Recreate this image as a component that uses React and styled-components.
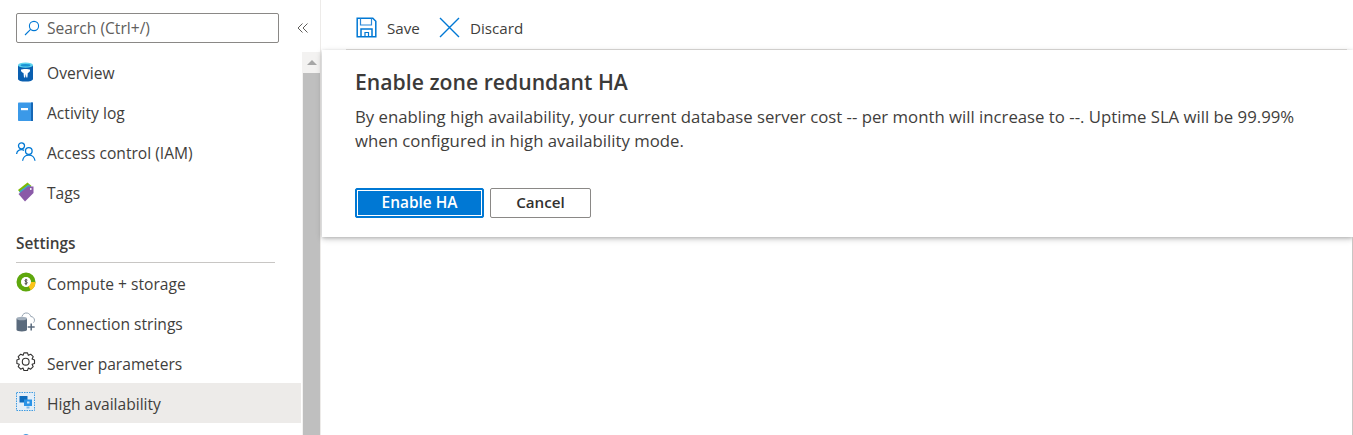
import styled, { createGlobalStyle } from "styled-components";

const GlobalStyle = createGlobalStyle`
  html, body { margin: 0; padding: 0; height: 435px; overflow: hidden; background: #fff; }
  body { font-family: "Open Sans", "Noto Sans", sans-serif; color: #323130; }
`;

const Page = styled.div`
  display: flex;
  width: 1353px;
  height: 435px;
  overflow: hidden;
`;

const Sidebar = styled.aside`
  width: 320px;
  flex: none;
  display: flex;
  flex-direction: column;
`;

const SearchRow = styled.div`
  height: 52px;
  flex: none;
  display: flex;
  align-items: flex-start;
  padding: 13px 0 0 16px;
  box-sizing: border-box;
`;

const SearchBox = styled.div`
  width: 263px;
  height: 30px;
  box-sizing: border-box;
  border: 1px solid #8a8886;
  border-radius: 2px;
  display: flex;
  align-items: center;
  gap: 7px;
  padding-left: 7px;
  font-size: 15.6px;
  color: #605e5c;
`;

const Collapse = styled.div`
  margin: 9px 0 0 18px;
  line-height: 0;
`;

const NavArea = styled.div`
  flex: 1;
  display: flex;
  min-height: 0;
`;

const NavList = styled.nav`
  width: 302px;
  flex: none;
  box-sizing: border-box;
  overflow: hidden;
  padding: 1px 1px 0 0;
`;

const NavItem = styled.div`
  height: 40px;
  display: flex;
  align-items: center;
  padding-left: 16px;
  gap: 11px;
  font-size: 15.6px;
  color: #3f3e3c;
  background: ${({ $active }) => ($active ? "#edebe9" : "transparent")};
`;

const NavLabel = styled.span`
  padding-top: ${({ $drop }) => ($drop ? "2px" : "0")};
`;

const IconSlot = styled.span`
  width: 20px;
  height: 20px;
  flex: none;
  line-height: 0;
  margin-bottom: 2px;
`;

const SectionTitle = styled.div`
  margin: 0 26px 0 16px;
  height: 50px;
  box-sizing: border-box;
  padding-top: 21px;
  border-bottom: 1px solid #c8c6c4;
  font-size: 15.4px;
  font-weight: 600;
  line-height: 20px;
  color: #3f3e3c;
`;

const ScrollBar = styled.div`
  width: 18px;
  flex: none;
  background: #f3f2f1;
  display: flex;
  flex-direction: column;
  align-items: center;
  padding-left: 1px;
  box-sizing: border-box;
`;

const ScrollArrow = styled.div`
  height: 21px;
  width: 100%;
  display: flex;
  align-items: center;
  justify-content: center;

  &::before {
    content: "";
    border-left: 5px solid transparent;
    border-right: 5px solid transparent;
    border-bottom: 5px solid #a6a6a6;
  }
`;

const ScrollThumb = styled.div`
  flex: 1;
  width: 100%;
  background: #bfbfbf;
`;

const Main = styled.main`
  flex: 1;
  display: flex;
  flex-direction: column;
  min-width: 0;
  border-left: 1px solid #edebe9;
`;

const Toolbar = styled.div`
  height: 50px;
  flex: none;
  box-sizing: border-box;
  margin-left: 25px;
  margin-right: 6px;
  padding: 6px 0 0 10px;
  display: flex;
  align-items: center;
  gap: 19px;
  border-bottom: 1px solid #e1dfdd;
`;

const ToolButton = styled.div`
  display: flex;
  align-items: center;
  gap: 10px;
  font-size: 15.2px;
  color: #3f3e3c;
`;

const ToolIcon = styled.span`
  line-height: 0;
`;

const Dialog = styled.section`
  height: 187px;
  flex: none;
  box-sizing: border-box;
  margin-left: 1px;
  padding: 18px 30px 0 33px;
  background: #fff;
  box-shadow: 0 1.6px 6px rgba(0, 0, 0, 0.22), 0 1px 3px rgba(0, 0, 0, 0.14);
`;

const DialogTitle = styled.h2`
  margin: 0;
  font-size: 21.2px;
  font-weight: 600;
  line-height: 28px;
  color: #3b3a39;
`;

const DialogText = styled.p`
  margin: 9px 0 0;
  font-size: 16.75px;
  line-height: 24px;
  color: #3f3e3c;
`;

const Actions = styled.div`
  margin-top: 35px;
  display: flex;
  gap: 6px;
`;

const PrimaryButton = styled.button`
  width: 129px;
  height: 30px;
  border: 1px solid #0078d4;
  border-radius: 2px;
  background: #0078d4;
  outline: 1px solid #fff;
  outline-offset: -3px;
  color: #fff;
  font: 600 15.4px "Open Sans", sans-serif;
  padding: 0 0 2px;
`;

const DefaultButton = styled.button`
  width: 101px;
  height: 30px;
  border: 1px solid #8a8886;
  border-radius: 2px;
  background: #fff;
  color: #323130;
  font: 600 15.2px "Open Sans", sans-serif;
  padding: 0 0 2px;
`;

const BladeBody = styled.div`
  flex: 1;
  border-right: 1px solid #c8c6c4;
`;

const SearchIcon = () => (
  <svg width="16" height="16" viewBox="0 0 16 16" fill="none" stroke="#0078d4" strokeWidth="1.1">
    <circle cx="10" cy="6" r="4.6" />
    <path d="M6.6 9.4 1 15" />
  </svg>
);

const CollapseIcon = () => (
  <svg width="12" height="12" viewBox="0 0 12 12" fill="none" stroke="#605e5c" strokeWidth="1">
    <path d="M5.5 1.5 1 6l4.5 4.5M10.5 1.5 6 6l4.5 4.5" />
  </svg>
);

const SaveIcon = () => (
  <svg width="21" height="21" viewBox="0 0 21 21" fill="none" stroke="#0078d4" strokeWidth="1.5">
    <path d="M1.2 1.2h15.6l3 3v15.6H1.2z" />
    <path d="M4.5 1.5v6.5h11V1.5" stroke="#2b88d8" strokeWidth="1.2" />
    <path d="M5 19.5v-7.5h11v7.5" />
    <path d="M9 19.5v-4h3.5v4" strokeWidth="1.2" />
  </svg>
);

const DiscardIcon = () => (
  <svg width="21" height="21" viewBox="0 0 21 21" fill="none" stroke="#0078d4" strokeWidth="1.4">
    <path d="M1 1l19 19M20 1 1 20" />
  </svg>
);

const OverviewIcon = () => (
  <svg width="20" height="20" viewBox="0.5 0 20 20">
    <path d="M2.5 3h15v14c0 1.6-3.4 2.6-7.5 2.6S2.5 18.6 2.5 17z" fill="#0a5fb0" />
    <ellipse cx="10" cy="3.2" rx="7.5" ry="2.6" fill="#5fd3ee" />
    <ellipse cx="10" cy="3.2" rx="5" ry="1.3" fill="#1b93d4" />
    <path d="M5.5 7.6c1-.9 8-.9 9 0 .4 1.8-.8 3.2-2.2 3.4l-.4 4.4h-1.1l-.5-3.5-.7 3.5H8.500l-.5-4.400C6.500 10.800 5.100 9.400 5.500 7.600z" fill="#fff" />
  </svg>
);

const ActivityIcon = () => (
  <svg width="20" height="20" viewBox="0.5 0 20 20">
    <rect x="2.5" y="0.5" width="15" height="18.5" rx="0.8" fill="#3b99e8" />
    <rect x="15.5" y="0.5" width="2" height="18.5" fill="#1667b5" />
    <rect x="5.5" y="6" width="7" height="2.2" fill="#fff" />
  </svg>
);

const AccessIcon = () => (
  <svg width="20" height="20" viewBox="0 0 20 20" fill="none" stroke="#0078d4" strokeWidth="1.3">
    <circle cx="5.5" cy="3.8" r="3" />
    <path d="M0.6 12c.4-2.6 2.4-4.3 5-4.3 1 0 1.8.2 2.5.7" />
    <circle cx="12.8" cy="9" r="3.3" />
    <path d="M6.6 18.8c.3-3.4 3-5.8 6.2-5.8s5.900 2.400 6.200 5.800" />
  </svg>
);

const TagsIcon = () => (
  <svg width="20" height="20" viewBox="0 0 20 20">
    <path d="M2 8 11.5 0.5l4 3.5L6 13z" fill="#7fba00" />
    <path d="M3 9.5 12.5 2.5l4.5 4L7 15z" fill="#3ea6c8" />
    <path d="M2.5 12 12 4.5h5.5v6.5L9 19.5z" fill="#8a5aa8" />
    <circle cx="14.8" cy="7" r="0.9" fill="#fff" />
  </svg>
);

const ComputeIcon = () => (
  <svg width="20" height="20" viewBox="0 0 20 20">
    <circle cx="10" cy="10" r="7.2" fill="none" stroke="#5ea70d" strokeWidth="4.6" />
    <path d="M17.2 10a7.2 7.2 0 0 1-3.6 6.2" fill="none" stroke="#fcc419" strokeWidth="4.6" />
    <circle cx="10" cy="10" r="4.8" fill="#fff" />
    <path d="M11.4 8.2c-1-.8-2.6-.4-2.500.6.100 1.100 2.400.8 2.400 2 0 1-1.700 1.300-2.700.5M10 6.800v6.400" fill="none" stroke="#3b3a39" strokeWidth="0.9" />
  </svg>
);

const ConnectionIcon = () => (
  <svg width="20" height="20" viewBox="0 0 20 20">
    <path d="M6 4.5c.6-2.6 3-4 5.4-3.4 1.8.4 3 1.800 3.400 3.400 2 .1 3.700 1.700 3.700 3.700 0 1-.4 1.900-1 2.500" fill="none" stroke="#8a98a8" strokeWidth="0.9" />
    <path d="M0.5 6.5h10.5v11.3c0 1-2.300 1.700-5.200 1.700S0.500 18.800 0.500 17.800z" fill="#5a6a7c" />
    <ellipse cx="5.8" cy="6.5" rx="5.2" ry="1.8" fill="#a3afbc" />
    <path d="M15.2 11.5v7M11.7 15h7" stroke="#5a6a7c" strokeWidth="1.5" />
  </svg>
);

// outline of an 8 tooth gear, worked out from the angles
const gearPath = () => {
  const cx = 9.7;
  const cy = 9.7;
  const points = [];
  for (let i = 0; i < 8; i++) {
    const a = (i * Math.PI) / 4;
    [
      [-0.39, 6.9],
      [-0.2, 9],
      [0.2, 9],
      [0.39, 6.9],
    ].forEach(([offset, r]) => {
      points.push(
        `${(cx + r * Math.sin(a + offset)).toFixed(2)} ${(cy - r * Math.cos(a + offset)).toFixed(2)}`
      );
    });
  }
  return `M${points.join("L")}Z`;
};

const GearIcon = () => (
  <svg width="20" height="20" viewBox="0 0 20 20" fill="none" stroke="#323130" strokeWidth="1.1">
    <path d={gearPath()} strokeLinejoin="round" />
    <circle cx="9.7" cy="9.7" r="3.4" />
  </svg>
);

const AvailabilityIcon = () => (
  <svg width="20" height="20" viewBox="0 0 20 20">
    <rect x="0.5" y="0.5" width="18" height="18" fill="#e4eef8" stroke="#3f9be0" strokeWidth="1" strokeDasharray="1.5 1" />
    <rect x="3.5" y="4" width="8" height="6.5" fill="#0f6cbd" />
    <rect x="8" y="7.5" width="8" height="6.5" fill="#2b93e6" />
    <rect x="11" y="9.5" width="2.5" height="2" fill="#cfe6f8" />
    <path d="M10.5 14.5h3v2h-3z" fill="#7fb8e8" />
  </svg>
);

const NextIcon = () => (
  <svg width="20" height="20" viewBox="0 0 20 20" fill="none" stroke="#0078d4" strokeWidth="1.3">
    <circle cx="10" cy="6" r="3.2" />
  </svg>
);

const generalItems = [
  { label: "Overview", icon: <OverviewIcon /> },
  { label: "Activity log", icon: <ActivityIcon /> },
  { label: "Access control (IAM)", icon: <AccessIcon /> },
  { label: "Tags", icon: <TagsIcon /> },
];

const settingsItems = [
  { label: "Compute + storage", icon: <ComputeIcon /> },
  { label: "Connection strings", icon: <ConnectionIcon /> },
  { label: "Server parameters", icon: <GearIcon /> },
  { label: "High availability", icon: <AvailabilityIcon />, active: true },
  { label: "", icon: <NextIcon /> },
];

const App = () => {
  const renderItem = (item, drop) => (
    <NavItem key={item.label} $active={item.active}>
      <IconSlot>{item.icon}</IconSlot>
      <NavLabel $drop={drop}>{item.label}</NavLabel>
    </NavItem>
  );

  return (
    <Page>
      <GlobalStyle />
      <Sidebar>
        <SearchRow>
          <SearchBox>
            <SearchIcon />
            Search (Ctrl+/)
          </SearchBox>
          <Collapse>
            <CollapseIcon />
          </Collapse>
        </SearchRow>
        <NavArea>
          <NavList>
            {generalItems.map(item => renderItem(item, false))}
            <SectionTitle>Settings</SectionTitle>
            {settingsItems.map(item => renderItem(item, true))}
          </NavList>
          <ScrollBar>
            <ScrollArrow />
            <ScrollThumb />
          </ScrollBar>
        </NavArea>
      </Sidebar>
      <Main>
        <Toolbar>
          <ToolButton>
            <ToolIcon>
              <SaveIcon />
            </ToolIcon>
            Save
          </ToolButton>
          <ToolButton>
            <ToolIcon>
              <DiscardIcon />
            </ToolIcon>
            Discard
          </ToolButton>
        </Toolbar>
        <Dialog>
          <DialogTitle>Enable zone redundant HA</DialogTitle>
          <DialogText>
            By enabling high availability, your current database server cost -- per month will
            increase to --. Uptime SLA will be 99.99%
            <br />
            when configured in high availability mode.
          </DialogText>
          <Actions>
            <PrimaryButton>Enable HA</PrimaryButton>
            <DefaultButton>Cancel</DefaultButton>
          </Actions>
        </Dialog>
        <BladeBody />
      </Main>
    </Page>
  );
};

export default App;
